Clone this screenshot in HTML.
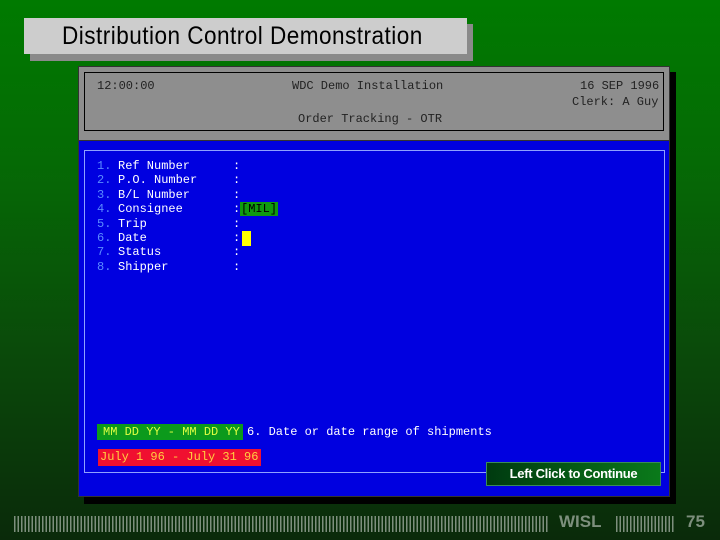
<!DOCTYPE html>
<html><head><style>
body{margin:0;width:720px;height:540px;overflow:hidden;background:linear-gradient(#007a00 0%,#056a05 30%,#0a4a0a 65%,#0a2a0a 100%);position:relative;font-family:"Liberation Sans",sans-serif}
.a{position:absolute}
.mono{font-family:"Liberation Mono",monospace;font-size:12px;white-space:pre}
.bars{background:repeating-linear-gradient(90deg,#7d8f7d 0 1.4px,transparent 1.4px 3.5px)}
</style></head><body>
<div class="a" style="left:30px;top:24px;width:443px;height:37px;background:#8a8a8a"></div>
<div class="a" style="left:24px;top:18px;width:443px;height:36px;background:#cdcdcd"></div>
<div class="a" style="left:62px;top:22px;font-size:24px;color:#000;transform:scaleX(0.94) scaleY(1.05);transform-origin:left top;letter-spacing:0.5px">Distribution Control Demonstration</div>

<div class="a" style="left:84px;top:72px;width:592px;height:432px;background:#000"></div>
<div class="a" style="left:78px;top:66px;width:592px;height:431px;background:#0000e0;border:1px solid #333;box-sizing:border-box"></div>
<div class="a" style="left:78px;top:66px;width:592px;height:75px;background:#8e8e8e;border:1px solid #333;box-sizing:border-box"></div>
<div class="a" style="left:84px;top:72px;width:580px;height:59px;border:1px solid #000;box-sizing:border-box"></div>
<div class="a mono" style="left:97px;top:79px;color:#222">12:00:00</div>
<div class="a mono" style="left:292px;top:79px;color:#222">WDC Demo Installation</div>
<div class="a mono" style="left:580px;top:79px;color:#222">16 SEP 1996</div>
<div class="a mono" style="left:572px;top:95px;color:#222">Clerk: A Guy</div>
<div class="a mono" style="left:298px;top:112px;color:#222">Order Tracking - OTR</div>

<div class="a" style="left:84px;top:150px;width:581px;height:323px;border:1px solid #8fa0ff;box-sizing:border-box"></div>
<div class="a mono" style="left:97px;top:159px;line-height:14.4px;color:#5a8aff">1.
2.
3.
4.
5.
6.
7.
8.</div>
<div class="a mono" style="left:118px;top:159px;line-height:14.4px;color:#fff">Ref Number
P.O. Number
B/L Number
Consignee
Trip
Date
Status
Shipper</div>
<div class="a mono" style="left:233px;top:159px;line-height:14.4px;color:#fff">:
:
:
:
:
:
:
:</div>
<div class="a mono" style="left:240px;top:202px;height:14px;line-height:14px;background:#109a10;color:#000;padding:0 1px">[MIL]</div>
<div class="a" style="left:242px;top:231px;width:9px;height:15px;background:#ffff00"></div>

<div class="a mono" style="left:97px;top:424px;width:146px;height:16px;line-height:16px;background:#0c9a1c;color:#e0ff40;padding-left:6px;box-sizing:border-box;overflow:hidden">MM DD YY - MM DD YY</div>
<div class="a mono" style="left:247px;top:424px;line-height:16px;color:#fff">6. Date or date range of shipments</div>
<div class="a mono" style="left:98px;top:449px;width:163px;height:17px;line-height:17px;background:#f01030;color:#ffd040;padding-left:2px;box-sizing:border-box;overflow:hidden">July 1 96 - July 31 96</div>

<div class="a" style="left:486px;top:462px;width:175px;height:24px;background:linear-gradient(90deg,#003a10,#0a7a1a);border:1px solid #3a8a5a;box-sizing:border-box;color:#fff;font-weight:bold;font-size:13px;line-height:22px;text-align:center;letter-spacing:-0.3px">Left Click to Continue</div>

<div class="a bars" style="left:14px;top:516px;width:535px;height:16px"></div>
<div class="a" style="left:559px;top:512px;color:#7d8f7d;font-weight:bold;font-size:17px">WISL</div>
<div class="a bars" style="left:616px;top:516px;width:59px;height:16px"></div>
<div class="a" style="left:686px;top:512px;color:#7d8f7d;font-weight:bold;font-size:17px">75</div>
</body></html>
